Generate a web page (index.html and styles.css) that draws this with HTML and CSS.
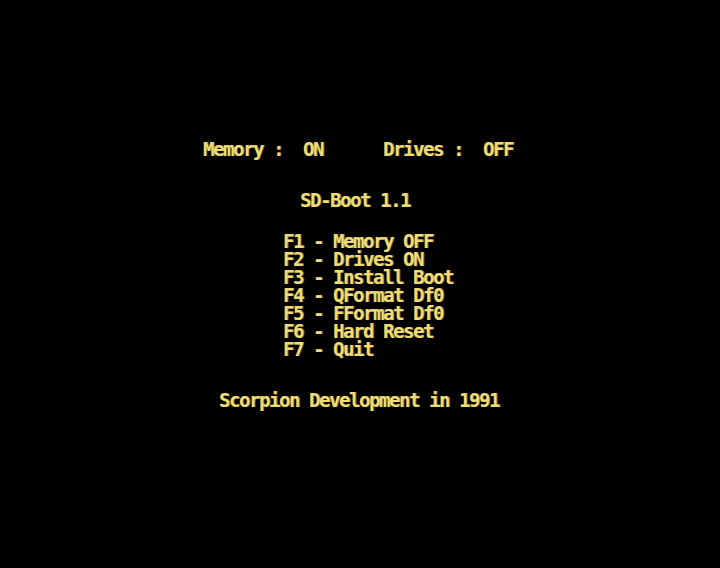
FILE: index.html
```html
<!DOCTYPE html>
<html>
<head>
<meta charset="utf-8">
<link rel="stylesheet" href="styles.css">
</head>
<body>
<div class="screen">
  <div class="line status">Memory :  ON      Drives :  OFF</div>
  <div class="line title">SD-Boot 1.1</div>
  <div class="menu">
    <div class="line">F1 - Memory OFF</div>
    <div class="line">F2 - Drives ON</div>
    <div class="line">F3 - Install Boot</div>
    <div class="line">F4 - QFormat Df0</div>
    <div class="line">F5 - FFormat Df0</div>
    <div class="line">F6 - Hard Reset</div>
    <div class="line">F7 - Quit</div>
  </div>
  <div class="line credit">Scorpion Development in 1991</div>
</div>
</body>
</html>
```
FILE: styles.css
```css
html, body {
  margin: 0;
  padding: 0;
  background: #000;
  width: 720px;
  height: 568px;
  overflow: hidden;
}
.screen {
  display: flex;
  flex-direction: column;
  padding-top: 140px;
  font-family: "DejaVu Sans Mono", "Liberation Mono", monospace;
  font-size: 19px;
  font-weight: bold;
  letter-spacing: -1.44px;
  color: #eedc78;
  text-shadow: 1px 0 0 #6e6026;
}
.line {
  height: 18px;
  line-height: 18px;
  white-space: pre;
}
.status {
  margin-left: 203px;
}
.title {
  margin-top: 33px;
  margin-left: 300px;
}
.menu {
  margin-top: 23px;
  margin-left: 283px;
  display: flex;
  flex-direction: column;
}
.credit {
  margin-top: 33px;
  margin-left: 219px;
}
```
